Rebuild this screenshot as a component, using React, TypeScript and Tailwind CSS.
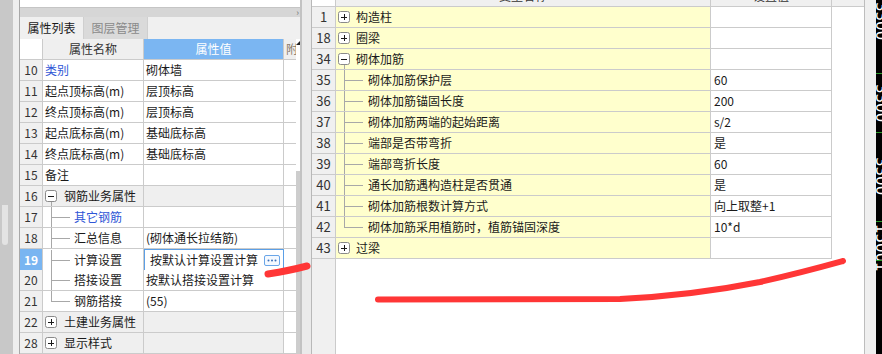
import React from 'react';

type Kind = 'plain' | 'group' | 'child' | 'last';
type Row = {
  n: number;
  name: string;
  value?: string;
  kind?: Kind;
  open?: boolean;
  blue?: boolean;
  edit?: boolean;
};

const leftRows: Row[] = [
  { n: 10, name: '类别', value: '砌体墙', blue: true },
  { n: 11, name: '起点顶标高(m)', value: '层顶标高' },
  { n: 12, name: '终点顶标高(m)', value: '层顶标高' },
  { n: 13, name: '起点底标高(m)', value: '基础底标高' },
  { n: 14, name: '终点底标高(m)', value: '基础底标高' },
  { n: 15, name: '备注' },
  { n: 16, name: '钢筋业务属性', kind: 'group', open: true },
  { n: 17, name: '其它钢筋', kind: 'child', blue: true },
  { n: 18, name: '汇总信息', value: '(砌体通长拉结筋)', kind: 'child' },
  { n: 19, name: '计算设置', value: '按默认计算设置计算', kind: 'child', edit: true },
  { n: 20, name: '搭接设置', value: '按默认搭接设置计算', kind: 'child' },
  { n: 21, name: '钢筋搭接', value: '(55)', kind: 'last' },
  { n: 22, name: '土建业务属性', kind: 'group' },
  { n: 28, name: '显示样式', kind: 'group' },
];

const rightRows: Row[] = [
  { n: 1, name: '构造柱', kind: 'group' },
  { n: 18, name: '圈梁', kind: 'group' },
  { n: 34, name: '砌体加筋', kind: 'group', open: true },
  { n: 35, name: '砌体加筋保护层', value: '60', kind: 'child' },
  { n: 36, name: '砌体加筋锚固长度', value: '200', kind: 'child' },
  { n: 37, name: '砌体加筋两端的起始距离', value: 's/2', kind: 'child' },
  { n: 38, name: '端部是否带弯折', value: '是', kind: 'child' },
  { n: 39, name: '端部弯折长度', value: '60', kind: 'child' },
  { n: 40, name: '通长加筋遇构造柱是否贯通', value: '是', kind: 'child' },
  { n: 41, name: '砌体加筋根数计算方式', value: '向上取整+1', kind: 'child' },
  { n: 42, name: '砌体加筋采用植筋时，植筋锚固深度', value: '10*d', kind: 'last' },
  { n: 43, name: '过梁', kind: 'group' },
];

const ruler = [
  { h: 'h-[74px] border-b', t: '3300', pt: 'pt-[2px]' },
  { h: 'h-[59px] border-b', t: '3300', pt: 'pt-[10px]' },
  { h: 'h-[89px] border-b', t: '3300', pt: 'pt-[24px]' },
  { h: 'h-[39px] border-b', t: '1500', pt: 'pt-[2px]' },
  { h: 'flex-1', t: '1', pt: 'pt-[1px]' },
];

const Toggle = ({ open }: { open?: boolean }) => (
  <svg width="12" height="20" viewBox="0 0 12 20" className="shrink-0">
    <rect x="0.5" y="4.5" width="11" height="11" rx="2" fill="#fff" stroke="#8a8a8a" />
    <path d="M3 10h6" stroke="#1a1a1a" shapeRendering="crispEdges" />
    {!open && <path d="M6 7v6" stroke="#1a1a1a" shapeRendering="crispEdges" />}
    {open && <path d="M6 16v4" stroke="#a8a8a8" shapeRendering="crispEdges" />}
  </svg>
);

const Branch = ({ last }: { last?: boolean }) => (
  <svg width="25" height="20" viewBox="0 0 25 20" className="shrink-0">
    <path
      d={last ? 'M6 0V10H25' : 'M6 0V20M6 10H25'}
      stroke="#a8a8a8"
      fill="none"
      shapeRendering="crispEdges"
    />
  </svg>
);

const NameContent = ({ r, gap, childGap }: { r: Row; gap: string; childGap: string }) => {
  if (r.kind === 'group')
    return (
      <>
        <Toggle open={r.open} />
        <span className={gap}>{r.name}</span>
      </>
    );
  if (r.kind === 'child' || r.kind === 'last')
    return (
      <>
        <Branch last={r.kind === 'last'} />
        <span className={childGap}>{r.name}</span>
      </>
    );
  return <span className="pl-[1px]">{r.name}</span>;
};

const LeftRow = ({ r }: { r: Row }) => {
  const grp = r.kind === 'group';
  const bg = grp ? 'bg-[#efefef]' : 'bg-white';
  const tree = r.kind && r.kind !== 'plain';
  return (
    <div className="grid grid-cols-[23px_101px_140px_12px] h-[21px] text-[12px] leading-[20px]">
      <div
        className={`border-r border-b border-[#cbcbcb] flex items-center justify-center ${
          r.edit ? 'bg-[#79b5f1] text-white font-bold' : 'bg-[#f0f0f0] text-[#333]'
        }`}
      >
        {r.n}
      </div>
      <div
        className={`border-r border-b border-[#cbcbcb] ${bg} flex items-center whitespace-nowrap overflow-hidden ${
          tree ? 'pl-[2px]' : 'pl-[1px]'
        } ${r.blue ? 'text-[#2f56d6]' : 'text-[#1a1a1a]'}`}
      >
        <NameContent r={r} gap="ml-[7px]" childGap="ml-[4px]" />
      </div>
      {r.edit ? (
        <div className="border border-[#5b9fe6] bg-white flex items-center justify-between pl-[5px] pr-[3px] whitespace-nowrap text-[#1a1a1a]">
          <span>{r.value}</span>
          <span className="w-[16px] h-[11px] border border-[#6aa6e8] rounded-[2px] bg-[#f4f9ff] flex items-center justify-center">
            <svg width="10" height="3" viewBox="0 0 10 3">
              <circle cx="1.5" cy="1.5" r="1" fill="#3b6fb8" />
              <circle cx="5" cy="1.5" r="1" fill="#3b6fb8" />
              <circle cx="8.5" cy="1.5" r="1" fill="#3b6fb8" />
            </svg>
          </span>
        </div>
      ) : (
        <div className={`border-r border-b border-[#cbcbcb] ${bg} flex items-center pl-[2px] whitespace-nowrap overflow-hidden text-[#1a1a1a]`}>
          {r.value}
        </div>
      )}
      <div className="border-b border-[#cbcbcb] bg-white" />
    </div>
  );
};

const RightRow = ({ r }: { r: Row }) => (
  <div className="grid grid-cols-[24px_375px_121px_32px] h-[21px] text-[12px] leading-[20px]">
    <div className="bg-[#f0f0f0] border-r border-b border-[#cbcbcb] flex items-center justify-center text-[13px] text-[#333]">
      {r.n}
    </div>
    <div className="bg-[#ffffcd] border-r border-b border-[#cbcbcb] flex items-center pl-[2px] whitespace-nowrap overflow-hidden text-[#1a1a1a]">
      <NameContent r={r} gap="ml-[6px]" childGap="ml-[5px]" />
    </div>
    <div className="bg-white border-r border-b border-[#cbcbcb] flex items-center pl-[3px] whitespace-nowrap text-[#1a1a1a]">
      {r.value}
    </div>
    <div className="bg-white" />
  </div>
);

export default function App() {
  return (
    <div className="w-[882px] h-[354px] flex relative overflow-hidden bg-white font-['Noto_Sans_CJK_SC',sans-serif]">
      {/* outer scroll strip */}
      <div className="w-[19px] flex shrink-0">
        <div className="w-[13px] bg-[#c8c8c8] flex flex-col">
          <div className="h-[205px]" />
          <div className="ml-[2px] w-[6px] h-[40px] bg-[#e3e3e3] rounded-b-[3px]" />
        </div>
        <div className="w-[6px] bg-[#eeeeee]" />
      </div>

      {/* property list panel */}
      <div className="w-[281px] shrink-0 border-l border-[#a8a8a8] flex flex-col">
        <div className="h-[8px] bg-white border-b border-[#c5c5c5]" />
        <div className="h-[9px] bg-[#d6d6d6] flex items-center justify-end pr-[1px] text-[9px] leading-[9px] text-[#777]">
          ›
        </div>
        <div className="h-[23px] bg-[#f0f0f0] flex text-[12px]">
          <div className="w-[63px] flex items-center justify-center text-[#1a1a1a]">属性列表</div>
          <div className="w-[65px] bg-[#dadada] border-x border-[#cfcfcf] flex items-center justify-center text-[#8a8a8a]">
            图层管理
          </div>
        </div>
        <div className="flex-1 flex">
          <div className="w-[276px] flex flex-col">
            <div className="grid grid-cols-[23px_101px_140px_12px] h-[21px] text-[12px] leading-[20px]">
              <div className="bg-white border-r border-b border-[#cbcbcb]" />
              <div className="bg-[#efefef] border-r border-b border-[#cbcbcb] flex items-center justify-center text-[#333]">
                属性名称
              </div>
              <div className="bg-[#7bb6f2] border-r border-b border-[#cbcbcb] flex items-center justify-center text-white">
                属性值
              </div>
              <div className="bg-[#efefef] border-b border-[#cbcbcb] overflow-hidden whitespace-nowrap pl-[2px] text-[#8a7a6a]">
                附加
              </div>
            </div>
            {leftRows.map((r) => (
              <LeftRow key={r.n} r={r} />
            ))}
          </div>
          <div className="w-[4px] flex flex-col">
            <div className="h-[132px] bg-white relative">
              <div className="absolute top-[2px] left-0 w-0 h-0 border-l-[4px] border-l-transparent border-b-[4px] border-b-[#222]" />
            </div>
            <div className="flex-1 bg-[#cdcdcd]" />
          </div>
        </div>
      </div>

      {/* splitter */}
      <div className="w-[12px] shrink-0 bg-[#eaeaea] border-l-2 border-[#c2c2c2] border-r border-r-[#b8b8b8]" />

      {/* variable settings panel */}
      <div className="w-[553px] shrink-0 border-r border-[#bdbdbd] flex flex-col overflow-hidden">
        <div className="grid grid-cols-[24px_375px_121px_32px] h-[21px] -mt-[14px] shrink-0 text-[12px] leading-[20px]">
          <div className="bg-white border-r border-b border-[#cbcbcb]" />
          <div className="bg-[#f0f0f0] border-r border-b border-[#cbcbcb] flex items-center justify-center text-[#333]">
            变量名称
          </div>
          <div className="bg-[#f0f0f0] border-r border-b border-[#cbcbcb] flex items-center justify-center text-[#333]">
            设置值
          </div>
          <div className="bg-[#f0f0f0] border-b border-[#cbcbcb]" />
        </div>
        {rightRows.map((r) => (
          <RightRow key={r.n} r={r} />
        ))}
        <div className="flex-1 flex">
          <div className="w-[24px] bg-[#f0f0f0] border-r border-[#cbcbcb]" />
          <div className="flex-1 bg-white" />
        </div>
      </div>

      <div className="w-[11px] shrink-0 bg-[#efefef]" />

      {/* drawing ruler */}
      <div className="w-[6px] shrink-0 bg-black flex flex-col overflow-hidden">
        {ruler.map((s, i) => (
          <div key={i} className={`${s.h} ${s.pt} border-[#2a9a2a] overflow-hidden`}>
            <span className="block -ml-[3px] [writing-mode:vertical-rl] text-white text-[15px] leading-none font-['DejaVu_Sans',sans-serif]">
              {s.t}
            </span>
          </div>
        ))}
      </div>

      {/* red annotation strokes */}
      <svg className="absolute inset-0 pointer-events-none" width="882" height="354" viewBox="0 0 882 354">
        <path d="M268 274 Q290 270.5 307 266" stroke="#ff3636" strokeWidth="7" strokeLinecap="round" fill="none" />
        <path
          d="M378 299.5 L620 299 C680 296 720 290 760 282 C800 273 825 266 843 261"
          stroke="#ff3636"
          strokeWidth="6"
          strokeLinecap="round"
          fill="none"
        />
      </svg>
    </div>
  );
}
